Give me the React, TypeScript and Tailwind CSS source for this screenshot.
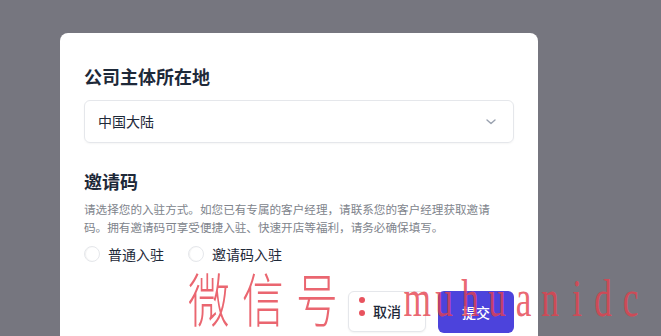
const cjk = { fontFamily: '"Noto Sans CJK SC", "Noto Sans", sans-serif' }

function Radio({ label }: { label: string }) {
  return (
    <label className="flex items-center gap-2">
      <span className="h-4 w-4 rounded-full border border-gray-200 bg-white shadow-[inset_1px_0_1px_rgba(0,0,0,0.06)]" />
      <span className="text-[14px] leading-5 text-gray-800">{label}</span>
    </label>
  )
}

// red "微信号：muhuanidc" stamp laid over the dialog
function Watermark() {
  return (
    <div className="pointer-events-none absolute inset-0 text-[#e5404c]/80">
      <span
        className="absolute left-[188px] top-[262px] origin-left scale-x-[0.72] whitespace-nowrap text-[58px] font-light leading-[70px] tracking-[17px]"
        style={cjk}
      >
        微信号
      </span>
      <span className="absolute left-[359px] top-[297px] h-[6px] w-[6px] rounded-full bg-[#e5404c]/90" />
      <span className="absolute left-[359px] top-[310px] h-[6px] w-[6px] rounded-full bg-[#e5404c]/90" />
      <span
        className="absolute left-[404px] top-[264px] flex text-[52px] leading-[70px]"
        style={{ fontFamily: '"Liberation Serif", serif' }}
      >
        {'muhuanidc'.split('').map((ch, i) => (
          <span key={i} className="flex w-[26.6px] justify-center">
            <span className="inline-block scale-x-[0.68]">{ch}</span>
          </span>
        ))}
      </span>
    </div>
  )
}

export default function App() {
  return (
    <div className="relative h-[336px] w-[661px] overflow-hidden bg-[#76767f]" style={cjk}>
      <div className="ml-[60px] mt-[33px] w-[478px] rounded-t-lg bg-white px-6 pb-10 pt-[29px]">
        <h2 className="text-[18px] font-semibold leading-7 text-gray-800">公司主体所在地</h2>
        <div className="mt-[10px] flex h-[43px] items-center justify-between rounded-md border border-gray-200 pl-[13px] pr-4 shadow-[0_1px_2px_rgba(0,0,0,0.04)]">
          <span className="text-[14px] text-gray-800">中国大陆</span>
          <svg width="10" height="6" viewBox="0 0 10 6" fill="none" className="mr-px text-gray-400">
            <path d="M1 1l4 3.5L9 1" stroke="currentColor" strokeWidth="1.4" strokeLinecap="round" strokeLinejoin="round" />
          </svg>
        </div>

        <h2 className="mt-6 text-[18px] font-semibold leading-7 text-gray-800">邀请码</h2>
        <p className="mt-[5px] text-[11.6px] leading-[18px] text-[#80848c]">
          <span className="block whitespace-nowrap">请选择您的入驻方式。如您已有专属的客户经理，请联系您的客户经理获取邀请</span>
          <span className="block whitespace-nowrap">码。拥有邀请码可享受便捷入驻、快速开店等福利，请务必确保填写。</span>
        </p>
        <div className="mt-2 flex items-center gap-6">
          <Radio label="普通入驻" />
          <Radio label="邀请码入驻" />
        </div>

        <div className="mt-[27px] flex justify-end gap-3">
          <button className="h-[41px] rounded-md border border-gray-200 bg-white px-6 text-[14px] font-medium text-gray-800 shadow-[0_1px_2px_rgba(0,0,0,0.05)]">
            取消
          </button>
          <button className="h-[42px] rounded-md bg-[#4c43dc] px-6 text-[14px] font-medium text-white">
            提交
          </button>
        </div>
      </div>
      <Watermark />
    </div>
  )
}
